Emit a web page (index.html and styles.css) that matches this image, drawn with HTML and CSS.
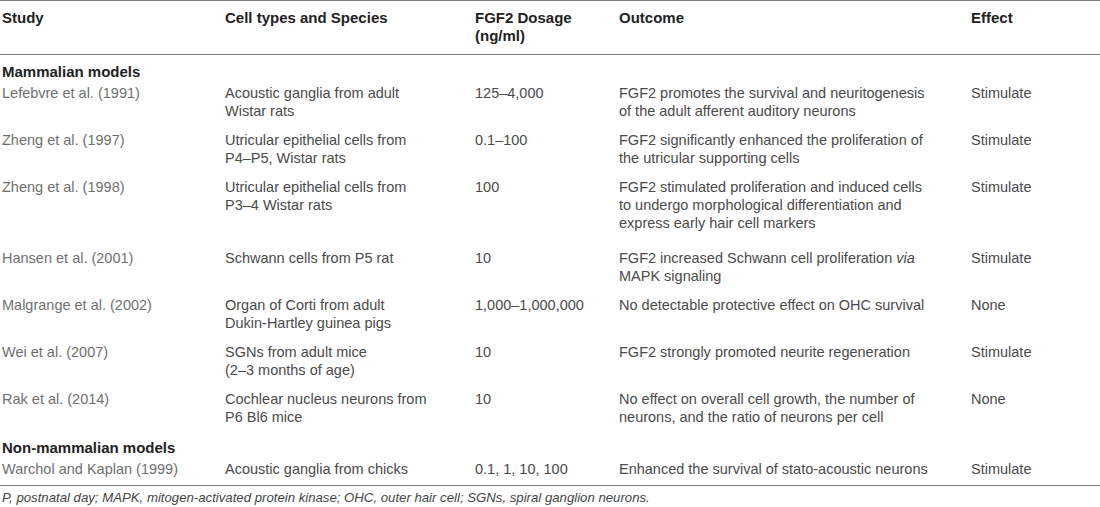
FILE: index.html
```html
<!DOCTYPE html>
<html lang="en">
<head>
    <meta charset="UTF-8">
    <title>FGF2 studies</title>
    <link rel="stylesheet" href="styles.css">
</head>
<body>
<table class="study-table">
    <colgroup>
        <col class="col-study">
        <col class="col-cells">
        <col class="col-dose">
        <col class="col-outcome">
        <col class="col-effect">
    </colgroup>
    <thead>
        <tr>
            <th>Study</th>
            <th>Cell types and Species</th>
            <th>FGF2 Dosage<br>(ng/ml)</th>
            <th>Outcome</th>
            <th>Effect</th>
        </tr>
    </thead>
    <tbody>
        <tr class="section first">
            <td colspan="5">Mammalian models</td>
        </tr>
        <tr>
            <td class="study">Lefebvre et al. (1991)</td>
            <td>Acoustic ganglia from adult<br>Wistar rats</td>
            <td>125–4,000</td>
            <td>FGF2 promotes the survival and neuritogenesis<br>of the adult afferent auditory neurons</td>
            <td>Stimulate</td>
        </tr>
        <tr>
            <td class="study">Zheng et al. (1997)</td>
            <td>Utricular epithelial cells from<br>P4–P5, Wistar rats</td>
            <td>0.1–100</td>
            <td>FGF2 significantly enhanced the proliferation of<br>the utricular supporting cells</td>
            <td>Stimulate</td>
        </tr>
        <tr class="tall">
            <td class="study">Zheng et al. (1998)</td>
            <td>Utricular epithelial cells from<br>P3–4 Wistar rats</td>
            <td>100</td>
            <td>FGF2 stimulated proliferation and induced cells<br>to undergo morphological differentiation and<br>express early hair cell markers</td>
            <td>Stimulate</td>
        </tr>
        <tr>
            <td class="study">Hansen et al. (2001)</td>
            <td>Schwann cells from P5 rat</td>
            <td>10</td>
            <td>FGF2 increased Schwann cell proliferation <i>via</i><br>MAPK signaling</td>
            <td>Stimulate</td>
        </tr>
        <tr>
            <td class="study">Malgrange et al. (2002)</td>
            <td>Organ of Corti from adult<br>Dukin-Hartley guinea pigs</td>
            <td>1,000–1,000,000</td>
            <td>No detectable protective effect on OHC survival</td>
            <td>None</td>
        </tr>
        <tr>
            <td class="study">Wei et al. (2007)</td>
            <td>SGNs from adult mice<br>(2–3 months of age)</td>
            <td>10</td>
            <td>FGF2 strongly promoted neurite regeneration</td>
            <td>Stimulate</td>
        </tr>
        <tr>
            <td class="study">Rak et al. (2014)</td>
            <td>Cochlear nucleus neurons from<br>P6 Bl6 mice</td>
            <td>10</td>
            <td>No effect on overall cell growth, the number of<br>neurons, and the ratio of neurons per cell</td>
            <td>None</td>
        </tr>
        <tr class="section">
            <td colspan="5">Non-mammalian models</td>
        </tr>
        <tr class="last">
            <td class="study">Warchol and Kaplan (1999)</td>
            <td>Acoustic ganglia from chicks</td>
            <td>0.1, 1, 10, 100</td>
            <td>Enhanced the survival of stato-acoustic neurons</td>
            <td>Stimulate</td>
        </tr>
    </tbody>
</table>
<p class="footnote">P, postnatal day; MAPK, mitogen-activated protein kinase; OHC, outer hair cell; SGNs, spiral ganglion neurons.</p>
</body>
</html>
```

FILE: styles.css
```css
* {
    margin: 0;
    padding: 0;
}

body {
    background: #fff;
    font-family: "Liberation Sans", Arial, sans-serif;
    font-size: 14.5px;
    line-height: 18px;
    color: #4a4a4a;
}

.study-table {
    width: 1100px;
    border-collapse: collapse;
    table-layout: fixed;
}

.col-study {
    width: 223px;
}

.col-cells {
    width: 250px;
}

.col-dose {
    width: 144px;
}

.col-outcome {
    width: 352px;
}

.col-effect {
    width: 131px;
}

th {
    text-align: left;
    vertical-align: top;
    font-size: 15px;
    font-weight: bold;
    color: #222;
    padding: 8px 2px 9px 2px;
    border-top: 1px solid #7a7a7a;
    border-bottom: 1px solid #7a7a7a;
    white-space: nowrap;
}

td {
    vertical-align: top;
    padding: 3px 2px 8px 2px;
    white-space: nowrap;
}

.study {
    color: #707070;
}

.tall td {
    padding-bottom: 14px;
}

.section td {
    font-size: 15px;
    font-weight: bold;
    color: #222;
    padding: 5px 2px 0 2px;
}

.section.first td {
    padding-top: 8px;
}

.last td {
    padding-bottom: 7px;
    border-bottom: 1px solid #7a7a7a;
}

.footnote {
    font-style: italic;
    font-size: 13.2px;
    line-height: 18px;
    color: #444;
    padding: 3px 2px 0 2px;
}
```
